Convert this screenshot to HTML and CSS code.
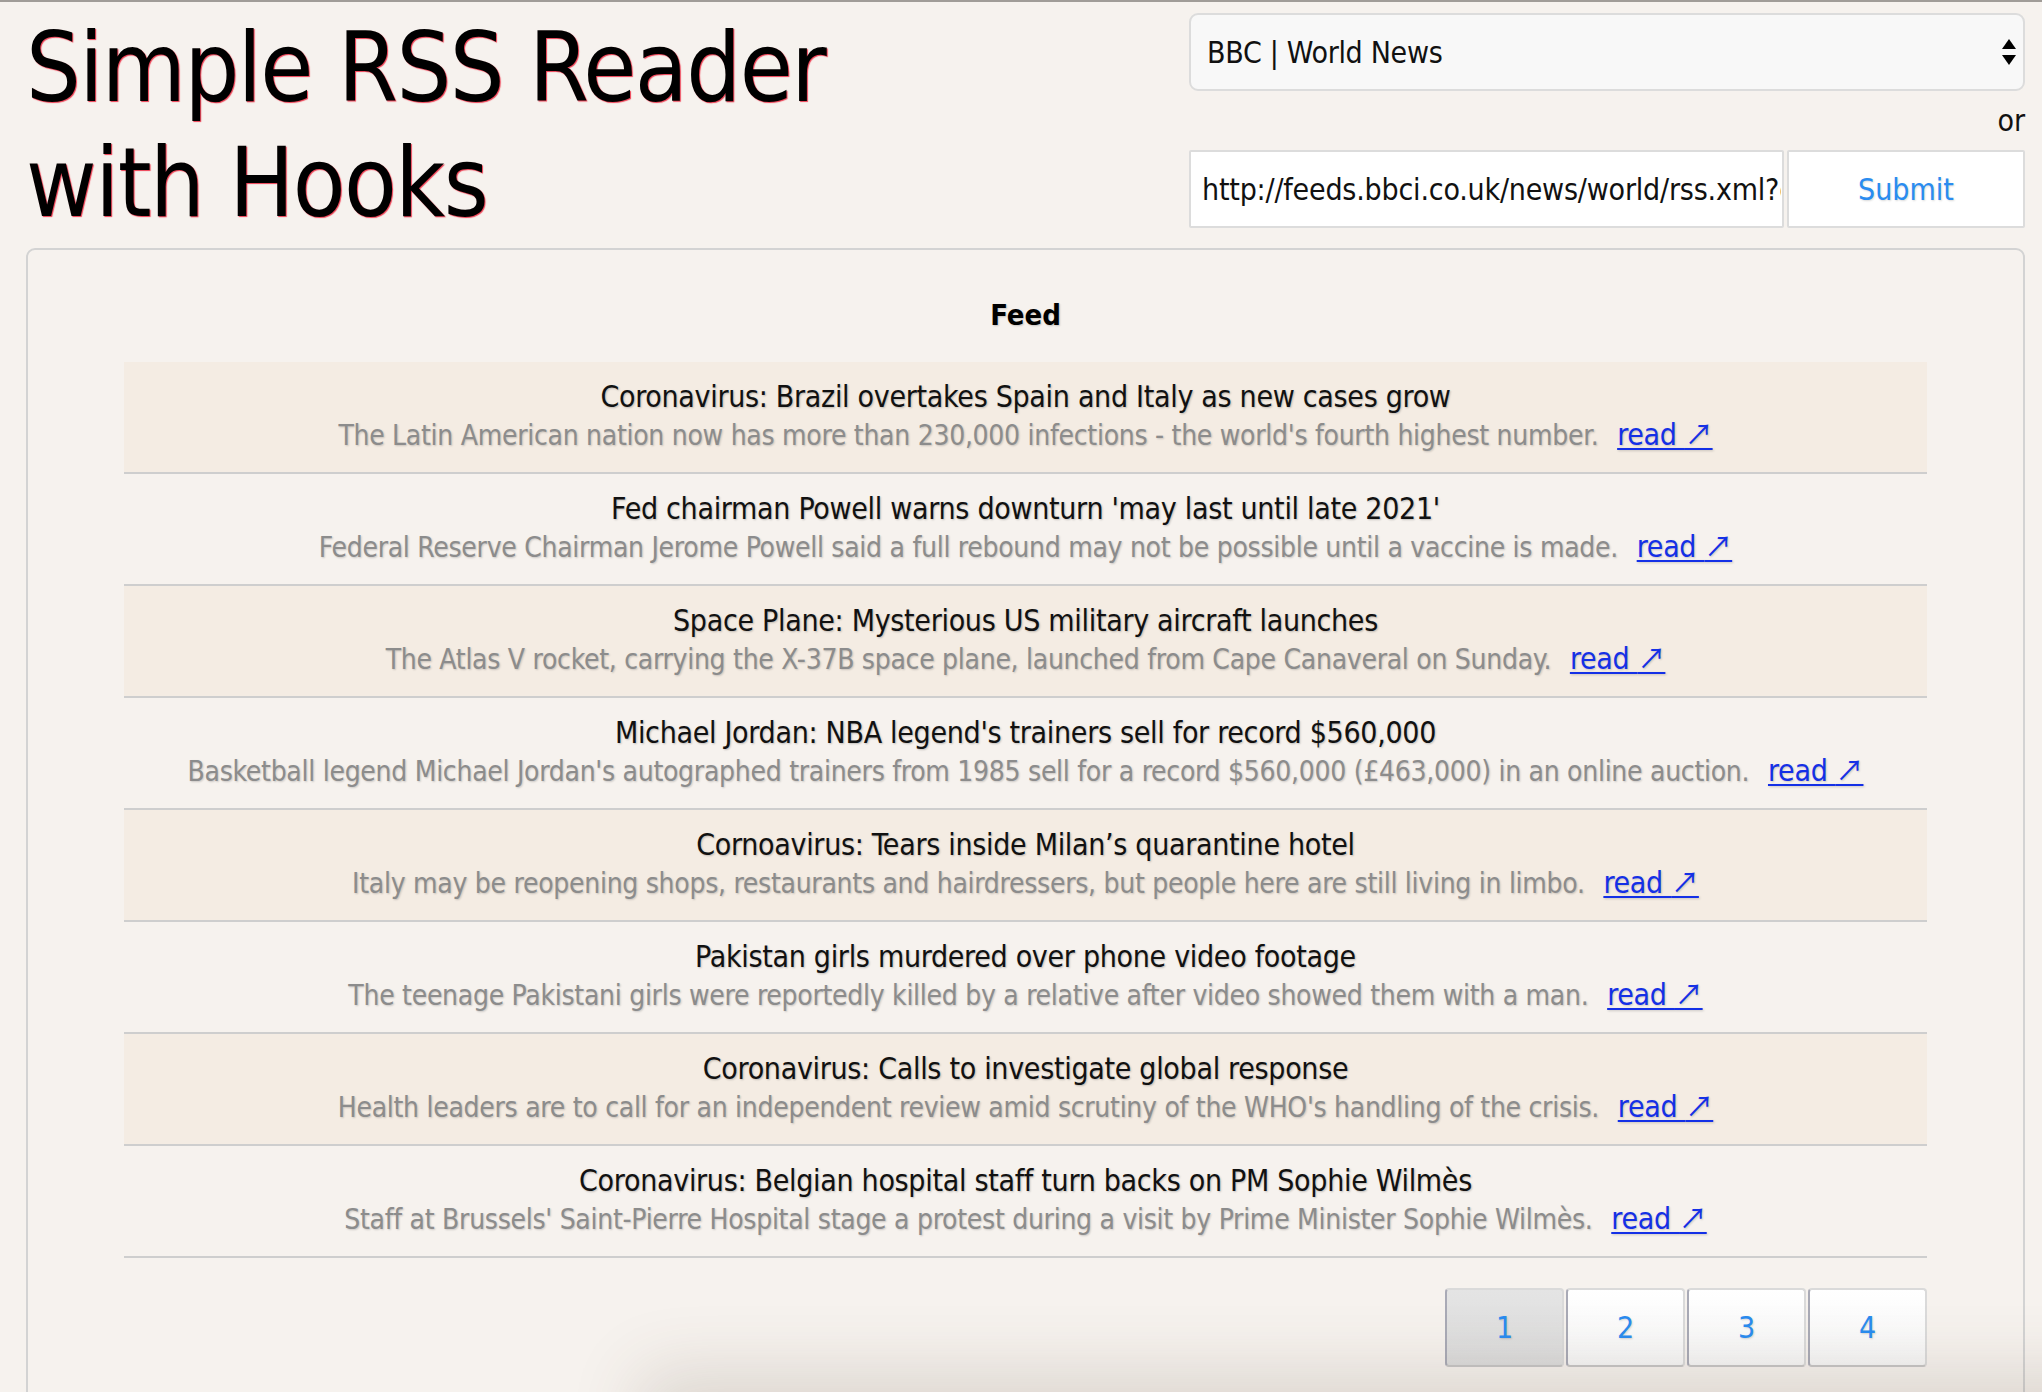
FILE: index.html
```html
<!DOCTYPE html>
<html lang="en">
<head>
<meta charset="utf-8">
<title>Simple RSS Reader with Hooks</title>
<link rel="stylesheet" href="styles.css">
</head>
<body>
<div class="page">
  <header class="header">
    <h1 class="title">Simple RSS Reader<br>with Hooks</h1>
    <form class="feed-form">
      <div class="select-wrap">
        <select class="feed-select">
          <option>BBC | World News</option>
        </select>
        <svg class="select-arrows" width="14" height="27" viewBox="0 0 14 27" aria-hidden="true">
          <path d="M7 0 L14 10 L0 10 Z" fill="#000"/>
          <path d="M0 16 L14 16 L7 26 Z" fill="#000"/>
        </svg>
      </div>
      <div class="or">or</div>
      <div class="url-row">
        <input class="url-input" type="text" value="http://feeds.bbci.co.uk/news/world/rss.xml?edition=uk">
        <button class="submit" type="button">Submit</button>
      </div>
    </form>
  </header>

  <main class="panel">
    <h2 class="feed-heading">Feed</h2>
    <ul class="items">
      <li class="item">
        <div class="item-title">Coronavirus: Brazil overtakes Spain and Italy as new cases grow</div>
        <div class="item-desc">The Latin American nation now has more than 230,000 infections - the world's fourth highest number. <a class="read" href="#">read <span class="arrow">↗</span></a></div>
      </li>
      <li class="item">
        <div class="item-title">Fed chairman Powell warns downturn 'may last until late 2021'</div>
        <div class="item-desc">Federal Reserve Chairman Jerome Powell said a full rebound may not be possible until a vaccine is made. <a class="read" href="#">read <span class="arrow">↗</span></a></div>
      </li>
      <li class="item">
        <div class="item-title">Space Plane: Mysterious US military aircraft launches</div>
        <div class="item-desc">The Atlas V rocket, carrying the X-37B space plane, launched from Cape Canaveral on Sunday. <a class="read" href="#">read <span class="arrow">↗</span></a></div>
      </li>
      <li class="item">
        <div class="item-title">Michael Jordan: NBA legend's trainers sell for record $560,000</div>
        <div class="item-desc">Basketball legend Michael Jordan's autographed trainers from 1985 sell for a record $560,000 (£463,000) in an online auction. <a class="read" href="#">read <span class="arrow">↗</span></a></div>
      </li>
      <li class="item">
        <div class="item-title">Cornoavirus: Tears inside Milan’s quarantine hotel</div>
        <div class="item-desc">Italy may be reopening shops, restaurants and hairdressers, but people here are still living in limbo. <a class="read" href="#">read <span class="arrow">↗</span></a></div>
      </li>
      <li class="item">
        <div class="item-title">Pakistan girls murdered over phone video footage</div>
        <div class="item-desc">The teenage Pakistani girls were reportedly killed by a relative after video showed them with a man. <a class="read" href="#">read <span class="arrow">↗</span></a></div>
      </li>
      <li class="item">
        <div class="item-title">Coronavirus: Calls to investigate global response</div>
        <div class="item-desc">Health leaders are to call for an independent review amid scrutiny of the WHO's handling of the crisis. <a class="read" href="#">read <span class="arrow">↗</span></a></div>
      </li>
      <li class="item">
        <div class="item-title">Coronavirus: Belgian hospital staff turn backs on PM Sophie Wilmès</div>
        <div class="item-desc">Staff at Brussels' Saint-Pierre Hospital stage a protest during a visit by Prime Minister Sophie Wilmès. <a class="read" href="#">read <span class="arrow">↗</span></a></div>
      </li>
    </ul>
    <nav class="pager">
      <button class="page-btn active" type="button">1</button>
      <button class="page-btn" type="button">2</button>
      <button class="page-btn" type="button">3</button>
      <button class="page-btn" type="button">4</button>
    </nav>
  </main>
</div>
<div class="bottom-shade"></div>
</body>
</html>
```

FILE: styles.css
```css
html, body {
  margin: 0;
  padding: 0;
}

body {
  background: #f6f2ee;
  border-top: 2px solid #a09c98;
  font-family: "DejaVu Sans Condensed", "DejaVu Sans", sans-serif;
  font-stretch: condensed;
  color: #111;
  overflow: hidden;
}

.page {
  padding: 0 17px 0 26px;
}

.header {
  display: flex;
  justify-content: space-between;
  align-items: flex-start;
  padding-top: 9px;
}

.title {
  margin: 0;
  font-size: 96px;
  font-weight: normal;
  line-height: 115px;
  letter-spacing: -1.5px;
  color: #000;
  text-shadow: 1px 1px 1px rgba(235, 0, 30, 0.75);
}

.feed-form {
  width: 836px;
  padding-top: 2px;
  display: flex;
  flex-direction: column;
}

.select-wrap {
  position: relative;
}

.feed-select {
  appearance: none;
  -webkit-appearance: none;
  width: 100%;
  height: 78px;
  box-sizing: border-box;
  margin: 0;
  padding: 0 16px;
  background: #f8f8f8;
  border: 2px solid #dcdcdc;
  border-radius: 9px;
  font-family: inherit;
  font-stretch: condensed;
  font-size: 30px;
  letter-spacing: -0.3px;
  color: #111;
}

.select-arrows {
  position: absolute;
  right: 9px;
  top: 26px;
}

.or {
  text-align: right;
  font-size: 30px;
  line-height: 59px;
  color: #111;
}

.url-row {
  display: flex;
  gap: 3px;
  height: 78px;
}

.url-input {
  width: 595px;
  box-sizing: border-box;
  margin: 0;
  padding: 0 1px 0 11px;
  background: #fff;
  border: 2px solid #dcdcdc;
  border-radius: 2px;
  font-family: inherit;
  font-stretch: condensed;
  font-size: 30px;
  letter-spacing: -0.2px;
  color: #111;
  outline: none;
}

.submit {
  flex: 1;
  margin: 0;
  background: #fff;
  border: 2px solid #dcdcdc;
  border-radius: 2px;
  font-family: inherit;
  font-stretch: condensed;
  font-size: 30px;
  color: #2a8cf0;
  text-shadow: 1px 1px 2px rgba(0, 0, 0, 0.15);
}

.panel {
  margin-top: 7px;
  border: 2px solid #d3d3d3;
  border-radius: 9px;
  padding: 46px 96px 0;
  min-height: 1200px;
}

.feed-heading {
  margin: 0 0 28px;
  text-align: center;
  font-size: 29px;
  font-weight: bold;
  line-height: 38px;
  color: #000;
  text-shadow: 1px 1px 2px rgba(0, 0, 0, 0.2);
}

.items {
  list-style: none;
  margin: 0;
  padding: 0;
}

.item {
  height: 112px;
  box-sizing: border-box;
  padding: 15px 0 0;
  border-bottom: 2px solid #cecece;
  text-align: center;
  font-size: 30px;
  line-height: 39px;
  letter-spacing: -0.3px;
}

.item:nth-child(odd) {
  background: #f4ece3;
}

.item-title {
  height: 39px;
  color: #111;
  text-shadow: 1px 1px 2px rgba(0, 0, 0, 0.22);
}

.item-desc {
  height: 39px;
  font-size: 28px;
  letter-spacing: -0.28px;
  color: #8c8c8c;
  text-shadow: 1px 1px 2px rgba(0, 0, 0, 0.18);
}

.read {
  margin-left: 11px;
  font-size: 30px;
  line-height: 0;
  letter-spacing: -0.3px;
  color: #1430e6;
  text-decoration-thickness: 2px;
  text-underline-offset: 3px;
}

.arrow {
  font-family: "Noto Sans CJK JP", "DejaVu Sans", sans-serif;
  font-stretch: normal;
  font-size: 28px;
  line-height: 0;
}

.pager {
  display: flex;
  justify-content: flex-end;
  gap: 2px;
  margin-top: 30px;
}

.page-btn {
  width: 119px;
  height: 79px;
  margin: 0;
  background: linear-gradient(#ffffff, #f6f6f6);
  border: 2px solid #dadada;
  border-left-color: #a9aab6;
  border-bottom-color: #c6c6c6;
  border-radius: 4px;
  font-family: inherit;
  font-stretch: condensed;
  font-size: 30px;
  color: #2a8cf0;
  text-shadow: 1px 1px 2px rgba(0, 0, 0, 0.15);
}

.page-btn.active {
  background: linear-gradient(#e4e4e4, #dcdcdc);
}

.bottom-shade {
  position: fixed;
  left: 660px;
  right: -80px;
  bottom: -90px;
  height: 90px;
  box-shadow: 0 0 70px 20px rgba(90, 70, 50, 0.16);
  pointer-events: none;
}
```
